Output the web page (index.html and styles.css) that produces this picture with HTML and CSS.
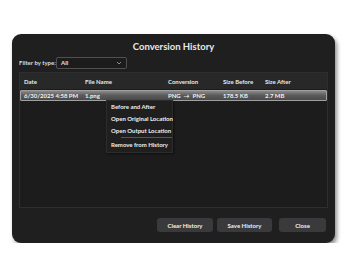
FILE: index.html
```html
<!DOCTYPE html>
<html lang="en">
<head>
    <meta charset="UTF-8">
    <title>Conversion History</title>
    <link rel="stylesheet" href="styles.css">
</head>
<body>
    <div class="dialog">
        <h2 class="title">Conversion History</h2>
        <div class="filter-row">
            <span class="filter-label">Filter by type:</span>
            <div class="select">
                <span>All</span>
                <svg width="6" height="4" viewBox="0 0 6 4"><path d="M1 1 L3 3 L5 1" fill="none" stroke="#aaa" stroke-width="0.8"/></svg>
            </div>
        </div>
        <div class="table">
            <div class="row head">
                <span class="c-date">Date</span>
                <span class="c-name">File Name</span>
                <span class="c-conv">Conversion</span>
                <span class="c-before">Size Before</span>
                <span class="c-after">Size After</span>
            </div>
            <div class="row item selected">
                <span class="c-date">6/30/2025 4:58 PM</span>
                <span class="c-name">1.png</span>
                <span class="c-conv">PNG &nbsp;&rarr;&nbsp; PNG</span>
                <span class="c-before">178.5 KB</span>
                <span class="c-after">2.7 MB</span>
            </div>
            <div class="menu">
                <div class="menu-item">Before and After</div>
                <div class="menu-item">Open Original Location</div>
                <div class="menu-item">Open Output Location</div>
                <div class="menu-sep"></div>
                <div class="menu-item">Remove from History</div>
            </div>
        </div>
        <div class="buttons">
            <button class="btn btn-clear">Clear History</button>
            <button class="btn btn-save">Save History</button>
            <button class="btn btn-close">Close</button>
        </div>
    </div>
</body>
</html>
```
FILE: styles.css
```css
body {
    margin: 0;
    padding: 34px 0 0 12px;
    background-color: #fff;
    font-family: Lato, "Liberation Sans", sans-serif;
    color: #e8e8e8;
}
.dialog {
    width: 323px;
    height: 209px;
    box-sizing: border-box;
    background-color: #1f1f1f;
    border-radius: 9px;
    box-shadow: 2px 3px 4px rgba(0, 0, 0, 0.45);
    padding: 6px 7px 0 7px;
    display: flex;
    flex-direction: column;
}
.title {
    margin: 0;
    font-size: 9.5px;
    font-weight: 700;
    text-align: center;
    line-height: 13px;
}
.filter-row {
    display: flex;
    align-items: center;
    margin-top: 3px;
    height: 13px;
}
.filter-label {
    font-size: 6px;
    font-weight: 700;
    width: 37px;
    color: #ddd;
    white-space: nowrap;
}
.select {
    width: 71px;
    height: 12px;
    box-sizing: border-box;
    border: 1px solid #505050;
    border-radius: 2px;
    background-color: #1c1c1c;
    display: flex;
    align-items: center;
    justify-content: space-between;
    padding: 0 4px 0 4px;
    font-size: 6px;
    font-weight: 700;
}
.table {
    position: relative;
    margin-top: 3px;
    height: 136px;
    box-sizing: border-box;
    border: 1px solid #2e2e2e;
    background-color: #1c1c1c;
}
.row {
    display: flex;
    align-items: center;
    font-size: 6px;
    font-weight: 700;
}
.row span {
    white-space: nowrap;
}
.head {
    height: 16px;
    background-color: #282828;
    margin-bottom: 1px;
}
.item {
    height: 11px;
    color: #f0f0f0;
}
.selected {
    box-sizing: border-box;
    border: 1px solid #a0a0a0;
    border-radius: 1px;
    background: linear-gradient(#8a8a8a, #5a5a5a 50%, #4a4a4a);
}
.c-date { width: 61px; padding-left: 3px; }
.head .c-date { padding-left: 4px; }
.c-name { width: 83px; }
.c-conv { width: 55px; }
.c-before { width: 42px; }
.c-after { width: 50px; }
.menu {
    position: absolute;
    left: 86px;
    top: 27px;
    width: 67px;
    box-sizing: border-box;
    background-color: #1f1f1f;
    border: 1px solid #2c2c2c;
    box-shadow: 1px 1px 2px rgba(0, 0, 0, 0.5);
    padding: 0 0 1px 0;
}
.menu-item {
    font-size: 6px;
    font-weight: 700;
    line-height: 12px;
    padding-left: 4px;
    color: #eee;
    white-space: nowrap;
}
.menu-sep {
    height: 1px;
    background-color: #555;
    margin: 0 0 1px 14px;
}
.buttons {
    display: flex;
    justify-content: flex-end;
    margin-top: 10px;
    padding-right: 2px;
}
.btn {
    height: 14px;
    border: none;
    border-radius: 3px;
    background-color: #3a3a3d;
    color: #f0f0f0;
    font-family: Lato, "Liberation Sans", sans-serif;
    font-size: 6px;
    font-weight: 700;
    padding: 0;
}
.btn-clear { width: 56px; }
.btn-save { width: 55px; margin-left: 4px; }
.btn-close { width: 47px; margin-left: 7px; }
```
